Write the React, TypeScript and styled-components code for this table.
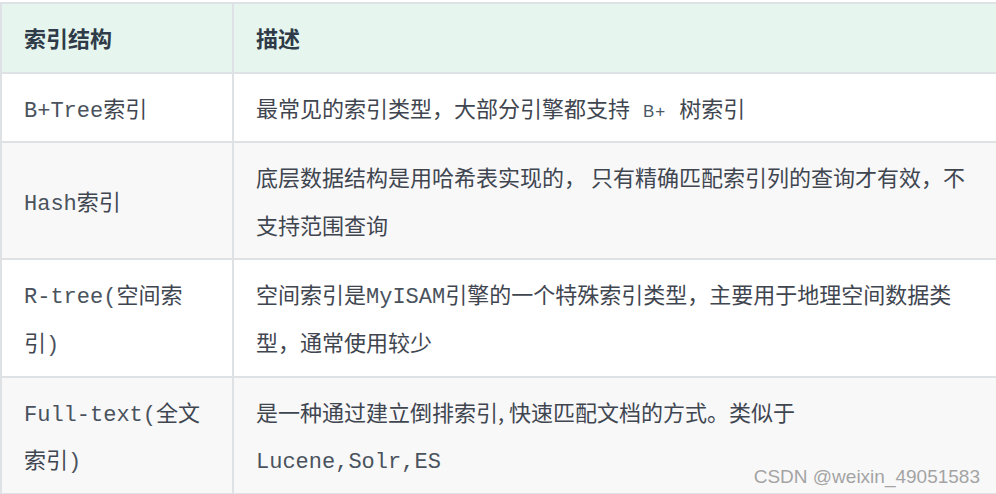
import React from 'react';
import styled, { createGlobalStyle } from 'styled-components';

const GlobalStyle = createGlobalStyle`
  html, body {
    margin: 0;
    padding: 0;
    background: #ffffff;
    overflow: hidden;
  }
`;

const Page = styled.div`
  position: relative;
  width: 996px;
  height: 494px;
  overflow: hidden;
  padding-top: 2px;
  box-sizing: border-box;
`;

const Table = styled.table`
  width: 998px;
  table-layout: fixed;
  border-collapse: separate;
  border-spacing: 0;
  border-top: 2px solid #dfe2e5;
  border-left: 2px solid #dfe2e5;
  font-family: 'Noto Sans CJK SC', 'Noto Sans', sans-serif;
  font-size: 22px;
  line-height: 47.6px;
  color: #3f4650;
`;

const Row = styled.tr<{ $shaded?: boolean }>`
  background: ${(p) => (p.$shaded ? '#f8f8f9' : '#ffffff')};
`;

const HeadRow = styled.tr`
  background: #e6f6ee;
`;

const HeadCell = styled.th<{ $first?: boolean }>`
  width: ${(p) => (p.$first ? '232px' : 'auto')};
  box-sizing: border-box;
  padding: 10px 22px;
  text-align: left;
  font-weight: 700;
  color: #2f3b48;
  border-right: 2px solid #dfe2e5;
  border-bottom: 2px solid #dfe2e5;
`;

const Cell = styled.td`
  padding: 10px 22px;
  vertical-align: middle;
  border-right: 2px solid #dfe2e5;
  border-bottom: 2px solid #dfe2e5;
`;

// latin parts are set in a courier-like face, CJK stays in the sans
const Mono = styled.span<{ $nowrap?: boolean }>`
  font-family: 'Liberation Mono', monospace;
  line-height: 1;
  color: #4a535d;
  white-space: ${(p) => (p.$nowrap ? 'nowrap' : 'normal')};
`;

const Code = styled.code`
  font-family: 'Liberation Sans', Arial, sans-serif;
  font-size: 17px;
  line-height: 1;
  letter-spacing: 1px;
  padding: 0 8px;
  color: #4a5866;
`;

const Watermark = styled.div`
  position: absolute;
  right: 16px;
  bottom: 8px;
  font-family: 'Liberation Sans', Arial, sans-serif;
  font-size: 19px;
  line-height: 1;
  color: #a3a3a3;
  text-shadow: 0 0 1px #ffffff;
`;

export default function App() {
  return (
    <Page>
      <GlobalStyle />
      <Table>
        <thead>
          <HeadRow>
            <HeadCell $first>索引结构</HeadCell>
            <HeadCell>描述</HeadCell>
          </HeadRow>
        </thead>
        <tbody>
          <Row>
            <Cell>
              <Mono>B+Tree</Mono>索引
            </Cell>
            <Cell>
              最常见的索引类型，大部分引擎都支持 <Code>B+</Code> 树索引
            </Cell>
          </Row>
          <Row $shaded>
            <Cell>
              <Mono>Hash</Mono>索引
            </Cell>
            <Cell>底层数据结构是用哈希表实现的， 只有精确匹配索引列的查询才有效，不支持范围查询</Cell>
          </Row>
          <Row>
            <Cell>
              <Mono>R-tree(</Mono>空间索引<Mono>)</Mono>
            </Cell>
            <Cell>
              空间索引是<Mono>MyISAM</Mono>引擎的一个特殊索引类型，主要用于地理空间数据类型，通常使用较少
            </Cell>
          </Row>
          <Row $shaded>
            <Cell>
              <Mono>Full-text(</Mono>全文索引<Mono>)</Mono>
            </Cell>
            <Cell>
              是一种通过建立倒排索引, 快速匹配文档的方式。类似于 <Mono $nowrap>Lucene,Solr,ES</Mono>
            </Cell>
          </Row>
        </tbody>
      </Table>
      <Watermark>CSDN @weixin_49051583</Watermark>
    </Page>
  );
}
